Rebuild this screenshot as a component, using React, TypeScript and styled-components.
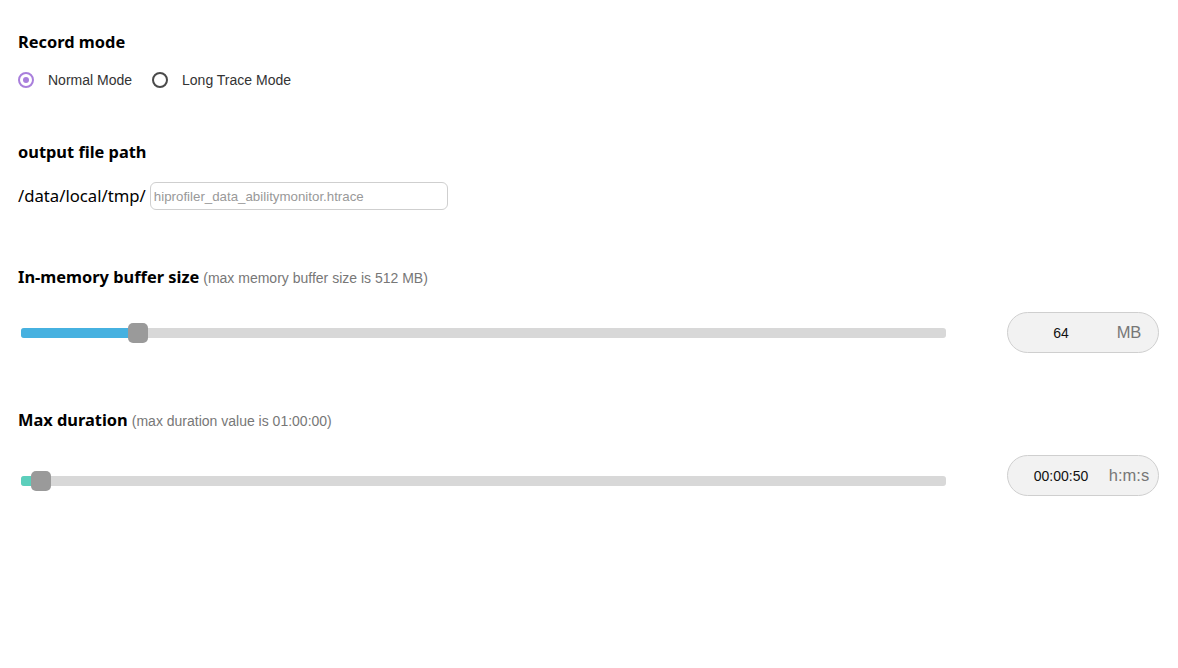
import * as React from 'react'
import styled, { createGlobalStyle } from 'styled-components'

const GlobalStyle = createGlobalStyle`
  html, body {
    margin: 0;
    padding: 0;
    background: #ffffff;
  }
  body {
    font-family: "Liberation Sans", Arial, sans-serif;
    color: #000;
  }
`

const Page = styled.div`
  display: flex;
  flex-direction: column;
  padding: 31px 19px 0 18px;
  width: 1178px;
  box-sizing: border-box;
`

const Section = styled.section<{ $top: number; $gap: number }>`
  display: flex;
  flex-direction: column;
  margin-top: ${({ $top }) => $top}px;
  gap: ${({ $gap }) => $gap}px;
`

const Title = styled.div`
  display: flex;
  align-items: baseline;
  height: 22px;
  line-height: 22px;
  font-family: "Noto Sans", sans-serif;
  font-weight: 700;
  font-size: 16.4px;
  white-space: nowrap;
`

const Hint = styled.span`
  margin-left: 4px;
  font-family: "Liberation Sans", Arial, sans-serif;
  font-weight: 400;
  font-size: 14px;
  color: #777;
`

const RadioGroup = styled.div`
  display: flex;
  align-items: center;
  height: 24px;
  gap: 20px;
`

const RadioLabel = styled.label`
  display: flex;
  align-items: center;
  gap: 14px;
  font-size: 14px;
  color: #333;
  cursor: pointer;
`

const RadioDot = styled.span<{ $checked?: boolean }>`
  display: flex;
  align-items: center;
  justify-content: center;
  width: 16px;
  height: 16px;
  box-sizing: border-box;
  border-radius: 50%;
  border: 2px solid ${({ $checked }) => ($checked ? '#a97fdc' : '#4a4a4a')};

  &::after {
    content: '';
    display: ${({ $checked }) => ($checked ? 'block' : 'none')};
    width: 6px;
    height: 6px;
    border-radius: 50%;
    background: #a97fdc;
  }
`

const PathRow = styled.div`
  display: flex;
  align-items: center;
  height: 28px;
  gap: 4px;
`

const PathPrefix = styled.span`
  font-family: "Noto Sans", sans-serif;
  font-size: 16.7px;
  line-height: 28px;
`

const PathInput = styled.input`
  width: 298px;
  height: 28px;
  box-sizing: border-box;
  border: 1px solid #cfcfcf;
  border-radius: 6px;
  padding: 0 3px;
  font-family: "Liberation Sans", Arial, sans-serif;
  font-size: 13.3px;
  outline: none;

  &::placeholder {
    color: #999;
  }
`

const SliderRow = styled.div`
  display: flex;
  align-items: flex-start;
  height: 41px;
`

const Slider = styled.div<{ $drop: number }>`
  position: relative;
  flex: 1;
  height: 20px;
  margin: ${({ $drop }) => $drop}px 61px 0 3px;
  display: flex;
  align-items: center;
`

const Track = styled.div`
  width: 100%;
  height: 10px;
  border-radius: 3px;
  background: #d8d8d8;
  overflow: hidden;
`

const Fill = styled.div<{ $color: string }>`
  height: 100%;
  background: ${({ $color }) => $color};
`

const Thumb = styled.div`
  position: absolute;
  top: 0;
  width: 20px;
  height: 20px;
  border-radius: 5px;
  background: #9a9a9a;
`

const ValueBox = styled.div`
  display: flex;
  align-items: center;
  width: 152px;
  height: 41px;
  box-sizing: border-box;
  padding-right: 14px;
  border: 1px solid #cfcfcf;
  border-radius: 21px;
  background: #f2f2f2;
`

const Value = styled.span`
  flex: 0 0 106px;
  text-align: center;
  font-size: 14px;
  color: #111;
`

const Unit = styled.span`
  flex: 1;
  min-width: 0;
  display: flex;
  justify-content: center;
  white-space: nowrap;
  font-size: 16.5px;
  color: #777;
`

type RangeProps = {
  ratio: number
  fillTo: number
  color: string
  drop: number
}

const Range = ({ ratio, fillTo, color, drop }: RangeProps) => (
  <Slider $drop={drop}>
    <Track>
      <Fill $color={color} style={{ width: `${fillTo * 100}%` }} />
    </Track>
    <Thumb style={{ left: `calc((100% - 20px) * ${ratio})` }} />
  </Slider>
)

export default function App() {
  return (
    <Page>
      <GlobalStyle />
      <Section $top={0} $gap={15}>
        <Title>Record mode</Title>
        <RadioGroup>
          <RadioLabel>
            <RadioDot $checked />
            Normal Mode
          </RadioLabel>
          <RadioLabel>
            <RadioDot />
            Long Trace Mode
          </RadioLabel>
        </RadioGroup>
      </Section>

      <Section $top={49} $gap={19}>
        <Title>output file path</Title>
        <PathRow>
          <PathPrefix>/data/local/tmp/</PathPrefix>
          <PathInput placeholder="hiprofiler_data_abilitymonitor.htrace" />
        </PathRow>
      </Section>

      <Section $top={56} $gap={24}>
        <Title>
          In-memory buffer size<Hint>(max memory buffer size is 512 MB)</Hint>
        </Title>
        <SliderRow>
          <Range ratio={0.118} fillTo={0.126} color="#46b1e0" drop={11} />
          <ValueBox>
            <Value>64</Value>
            <Unit>MB</Unit>
          </ValueBox>
        </SliderRow>
      </Section>

      <Section $top={56} $gap={24}>
        <Title>
          Max duration<Hint>(max duration value is 01:00:00)</Hint>
        </Title>
        <SliderRow>
          <Range ratio={0.011} fillTo={0.02} color="#5ccfbc" drop={16} />
          <ValueBox>
            <Value>00:00:50</Value>
            <Unit>h:m:s</Unit>
          </ValueBox>
        </SliderRow>
      </Section>
    </Page>
  )
}
